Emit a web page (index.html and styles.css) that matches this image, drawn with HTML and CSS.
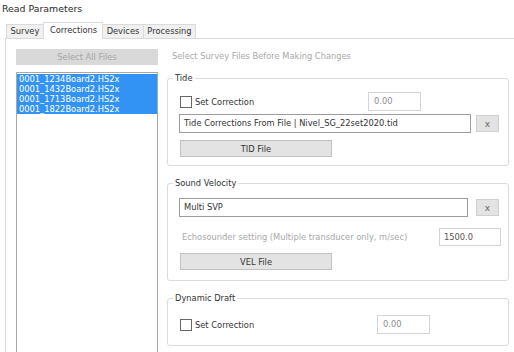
FILE: index.html
```html
<!DOCTYPE html>
<html>
    <head>
        <title>Read Parameters</title>
        <link rel="stylesheet" href="styles.css">
    </head>
    <body>
        <div class="title">Read Parameters</div>
        <div class="tabs">
            <div class="tab">Survey</div>
            <div class="tab active">Corrections</div>
            <div class="tab">Devices</div>
            <div class="tab">Processing</div>
        </div>
        <div class="page">
            <div class="files">
                <button class="select-all" disabled>Select All Files</button>
                <div class="listbox">
                    <div class="item selected">0001_1234Board2.HS2x</div>
                    <div class="item selected">0001_1432Board2.HS2x</div>
                    <div class="item selected">0001_1713Board2.HS2x</div>
                    <div class="item selected">0001_1822Board2.HS2x</div>
                </div>
            </div>
            <div class="settings">
                <div class="hint">Select Survey Files Before Making Changes</div>

                <fieldset class="group tide">
                    <legend>Tide</legend>
                    <div class="row">
                        <label class="check"><span class="box"></span>Set Correction</label>
                        <div class="field small disabled">0.00</div>
                    </div>
                    <div class="row file-row">
                        <div class="field file">Tide Corrections From File | Nivel_SG_22set2020.tid</div>
                        <button class="clear">x</button>
                    </div>
                    <button class="load">TID File</button>
                </fieldset>

                <fieldset class="group velocity">
                    <legend>Sound Velocity</legend>
                    <div class="row file-row">
                        <div class="field file svp">Multi SVP</div>
                        <button class="clear">x</button>
                    </div>
                    <div class="row echo-row">
                        <span class="muted">Echosounder setting (Multiple transducer only, m/sec)</span>
                        <div class="field echo">1500.0</div>
                    </div>
                    <button class="load">VEL File</button>
                </fieldset>

                <fieldset class="group draft">
                    <legend>Dynamic Draft</legend>
                    <div class="row">
                        <label class="check wide"><span class="box"></span>Set Correction</label>
                        <div class="field small disabled">0.00</div>
                    </div>
                </fieldset>
            </div>
        </div>
    </body>
</html>
```

FILE: styles.css
```css
body
{
    margin:0;
    width:514px;
    height:352px;
    overflow:hidden;
    background:#fff;
    color:#333;
    font-family:'DejaVu Sans',sans-serif;
    font-size:8.3px;
    font-weight:normal;
}
.title
{
    height:22px;
    padding-left:2px;
    line-height:17px;
    font-size:9.4px;
    color:#2a2a2a;
}
.tabs
{
    display:flex;
    align-items:flex-end;
    height:16px;
    padding-left:6px;
}
.tab
{
    height:13px;
    line-height:13px;
    padding:0 3.5px;
    border:1px solid #dadada;
    border-bottom:none;
    margin-right:-1px;
    background:#f0f0f0;
}
.tab.active
{
    position:relative;
    height:16px;
    line-height:15px;
    margin-bottom:-1px;
    padding:0 5px 0 6px;
    background:#fff;
}
.page
{
    display:flex;
    height:320px;
    margin-left:5px;
    border:1px solid #dadada;
    border-right:none;
}
.files
{
    display:flex;
    flex-direction:column;
    width:142px;
    padding:10px 0 0 10px;
}
.select-all
{
    height:16px;
    padding:0;
    border:none;
    background:#d9d9d9;
    color:#a6a6a6;
    font:inherit;
}
.listbox
{
    flex:1;
    margin-top:7px;
    padding-top:1px;
    border:1px solid #a8a8a8;
}
.item
{
    height:10px;
    line-height:10px;
    padding-left:2px;
}
.item.selected
{
    background:#3393f5;
    color:#fff;
}
.settings
{
    width:342px;
    margin-left:9px;
}
.hint
{
    margin:12px 0 12px 5px;
    line-height:10px;
    color:#a8a8a8;
}
.group
{
    margin:0;
    padding:9px 7px 8px 11px;
    border:1px solid #dcdcdc;
    border-radius:3px;
}
.group legend
{
    margin-left:-6px;
    padding:0 2px;
    line-height:10px;
    font-weight:normal;
}
.velocity
{
    margin-top:12px;
    padding-top:10px;
    padding-bottom:10px;
}
.draft
{
    margin-top:12px;
    padding-top:12px;
    padding-bottom:11px;
}
.row
{
    display:flex;
    align-items:center;
}
.check
{
    display:flex;
    align-items:center;
    width:188px;
    padding-left:1px;
}
.check.wide
{
    width:197px;
}
.box
{
    width:10px;
    height:10px;
    margin-right:3px;
    border:1px solid #666;
    background:#fff;
}
.field
{
    box-sizing:border-box;
    height:18px;
    line-height:16px;
    padding-left:4px;
    border:1px solid #9c9c9c;
    background:#fff;
}
.field.small
{
    width:53px;
    height:19px;
    line-height:17px;
    padding-left:5px;
}
.field.disabled
{
    border-color:#d4d4d4;
    color:#8c8c8c;
}
.file-row
{
    margin-top:3px;
}
.velocity .file-row
{
    margin-top:0;
}
.field.file
{
    width:292px;
    height:19px;
    line-height:17px;
}
.field.svp
{
    width:289px;
    margin-right:3px;
}
.clear
{
    width:23px;
    height:17px;
    margin-left:5px;
    padding:0;
    border:1px solid #cfcfcf;
    background:#e3e3e3;
    color:#666;
    font:inherit;
    font-size:9px;
}
.load
{
    display:block;
    width:152px;
    height:17px;
    margin-top:7px;
    margin-left:1px;
    padding:0;
    border:1px solid #c2c2c2;
    background:#e3e3e3;
    color:#333;
    font:inherit;
}
.echo-row
{
    justify-content:space-between;
    margin-top:11px;
}
.muted
{
    padding-left:3px;
    color:#a8a8a8;
}
.field.echo
{
    width:62px;
    border-color:#d4d4d4;
    color:#555;
    padding-left:4px;
}
```
